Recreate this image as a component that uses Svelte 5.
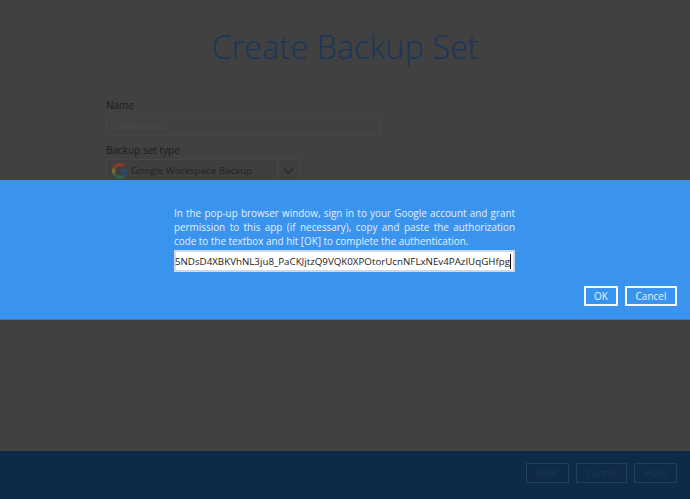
<script>
  const code = "5NDsD4XBKVhNL3ju8_PaCKJjtzQ9VQK0XPOtorUcnNFLxNEv4PAzIUqGHfpg";
</script>

<div class="page">
  <main class="content">
    <h1>Create Backup Set</h1>
    <form class="form">
      <label class="label" for="name">Name</label>
      <div class="name" id="name">GWBackup</div>
      <span class="label type">Backup set type</span>
      <div class="select">
        <svg class="g" viewBox="0 0 48 48" width="16" height="16">
          <path fill="#8a3a30" d="M24 9.500c3.500 0 6.700 1.300 9.200 3.400l6.900-6.900C35.900 2.400 30.300 0 24 0 14.600 0 6.500 5.400 2.600 13.200l8 6.200C12.500 13.600 17.800 9.500 24 9.500z"/>
          <path fill="#2c4a70" d="M47 24.500c0-1.600-.2-3.200-.4-4.700H24v9h13c-.6 3-2.300 5.500-4.800 7.200l7.700 6C44.400 37.900 47 31.800 47 24.500z"/>
          <path fill="#80692a" d="M10.600 28.600A14.500 14.500 0 0 1 9.800 24c0-1.600.3-3.100.8-4.600l-8-6.200A24 24 0 0 0 0 24c0 3.900.9 7.500 2.600 10.800l8-6.200z"/>
          <path fill="#35603f" d="M24 48c6.500 0 11.900-2.100 15.900-5.800l-7.700-6c-2.200 1.400-4.900 2.300-8.200 2.300-6.200 0-11.500-4.200-13.400-9.800l-8 6.200C6.500 42.600 14.600 48 24 48z"/>
        </svg>
        <span class="select-text">Google Workspace Backup</span>
        <svg class="chev" viewBox="0 0 12 8" width="11" height="7"><path d="M1 1.500l5 5 5-5" fill="none" stroke="#2c2c2c" stroke-width="2"/></svg>
      </div>
    </form>
  </main>
  <footer class="footer">
    <button class="dim next">Next</button>
    <button class="dim cancel">Cancel</button>
    <button class="dim next">Help</button>
  </footer>

  <div class="banner">
    <div class="dialog">
      <p>In the pop-up browser window, sign in to your Google account and grant permission to this app (if necessary), copy and paste the authorization code to the textbox and hit [OK] to complete the authentication.</p>
      <div class="input"><span class="code">{code}</span><i class="caret"></i></div>
    </div>
    <div class="actions">
      <button class="solid">OK</button>
      <button class="solid">Cancel</button>
    </div>
  </div>
</div>

<style>
  :global(body) { margin: 0; }
  .page {
    position: relative;
    width: 690px;
    height: 499px;
    overflow: hidden;
    display: flex;
    flex-direction: column;
    background: #414141;
    font-family: "Open Sans", "Liberation Sans", sans-serif;
  }
  .content { flex: 1; padding-top: 26px; }
  h1 {
    margin: 0;
    text-align: center;
    font-size: 32.500px;
    line-height: 42px;
    font-weight: 300;
    color: #18375a;
  }
  .form { margin: 30px 0 0 106px; display: flex; flex-direction: column; align-items: flex-start; }
  .label { font-size: 10px; line-height: 14px; color: #1c1c1c; }
  .name {
    box-sizing: border-box;
    width: 274px;
    height: 20px;
    margin-top: 4px;
    padding-left: 4px;
    border: 1px solid #464646;
    font-size: 10px;
    line-height: 18px;
    color: #4a4a4a;
  }
  .type { margin-top: 7px; }
  .select {
    box-sizing: border-box;
    width: 194px;
    height: 24px;
    margin-top: 2px;
    display: flex;
    align-items: center;
    border: 1px solid #464646;
    padding-left: 5px;
    background: #3f3f3f;
  }
  .g { flex: none; }
  .select-text { margin-left: 3px; padding-bottom: 2px; font-size: 9.800px; color: #232323; flex: 1; white-space: nowrap; }
  .chev { margin-right: 5px; padding-left: 5px; border-left: 1px solid #464646; height: 22px; }
  .footer {
    height: 48px;
    background: #0e2a46;
    display: flex;
    justify-content: flex-end;
    align-items: center;
    gap: 7px;
    padding-right: 13px;
    padding-bottom: 4px;
    box-sizing: border-box;
  }
  button { font-family: inherit; background: transparent; cursor: pointer; padding: 0; }
  .dim {
    height: 20px;
    box-sizing: border-box;
    border: 1px solid #233e5a;
    color: #1c3650;
    font-size: 10px;
  }
  .next { width: 43px; }
  .cancel { width: 51px; }
  .banner {
    position: absolute;
    left: 0;
    right: 0;
    top: 180px;
    height: 140px;
    box-sizing: border-box;
    background: #3a93ed;
    border-bottom: 1px solid #4a7aa8;
    padding: 26px 13px 0 174px;
    display: flex;
    flex-direction: column;
  }
  .dialog { width: 341px; }
  p {
    margin: 0;
    font-size: 9.900px;
    line-height: 14px;
    color: #e4f0fc;
    text-align: justify;
  }
  .input {
    box-sizing: border-box;
    margin-top: 2px;
    height: 22px;
    width: 341px;
    background: #fff;
    border: 2px solid #cfd9e4;
    display: flex;
    justify-content: flex-end;
    align-items: center;
    padding-right: 2px;
    white-space: nowrap;
  }
  .code { font-size: 9.750px; color: #222; }
  .caret { width: 1px; height: 15px; background: #111; flex: none; }
  .actions { display: flex; justify-content: flex-end; gap: 7px; margin-top: 14px; }
  .solid {
    height: 20px;
    border: 2px solid #f3f8fe;
    box-sizing: border-box;
    color: #e8f2fd;
    font-size: 10px;
    font-weight: 500;
    line-height: 15px;
  }
  .solid:first-child { width: 34px; }
  .solid:last-child { width: 52px; }
</style>
